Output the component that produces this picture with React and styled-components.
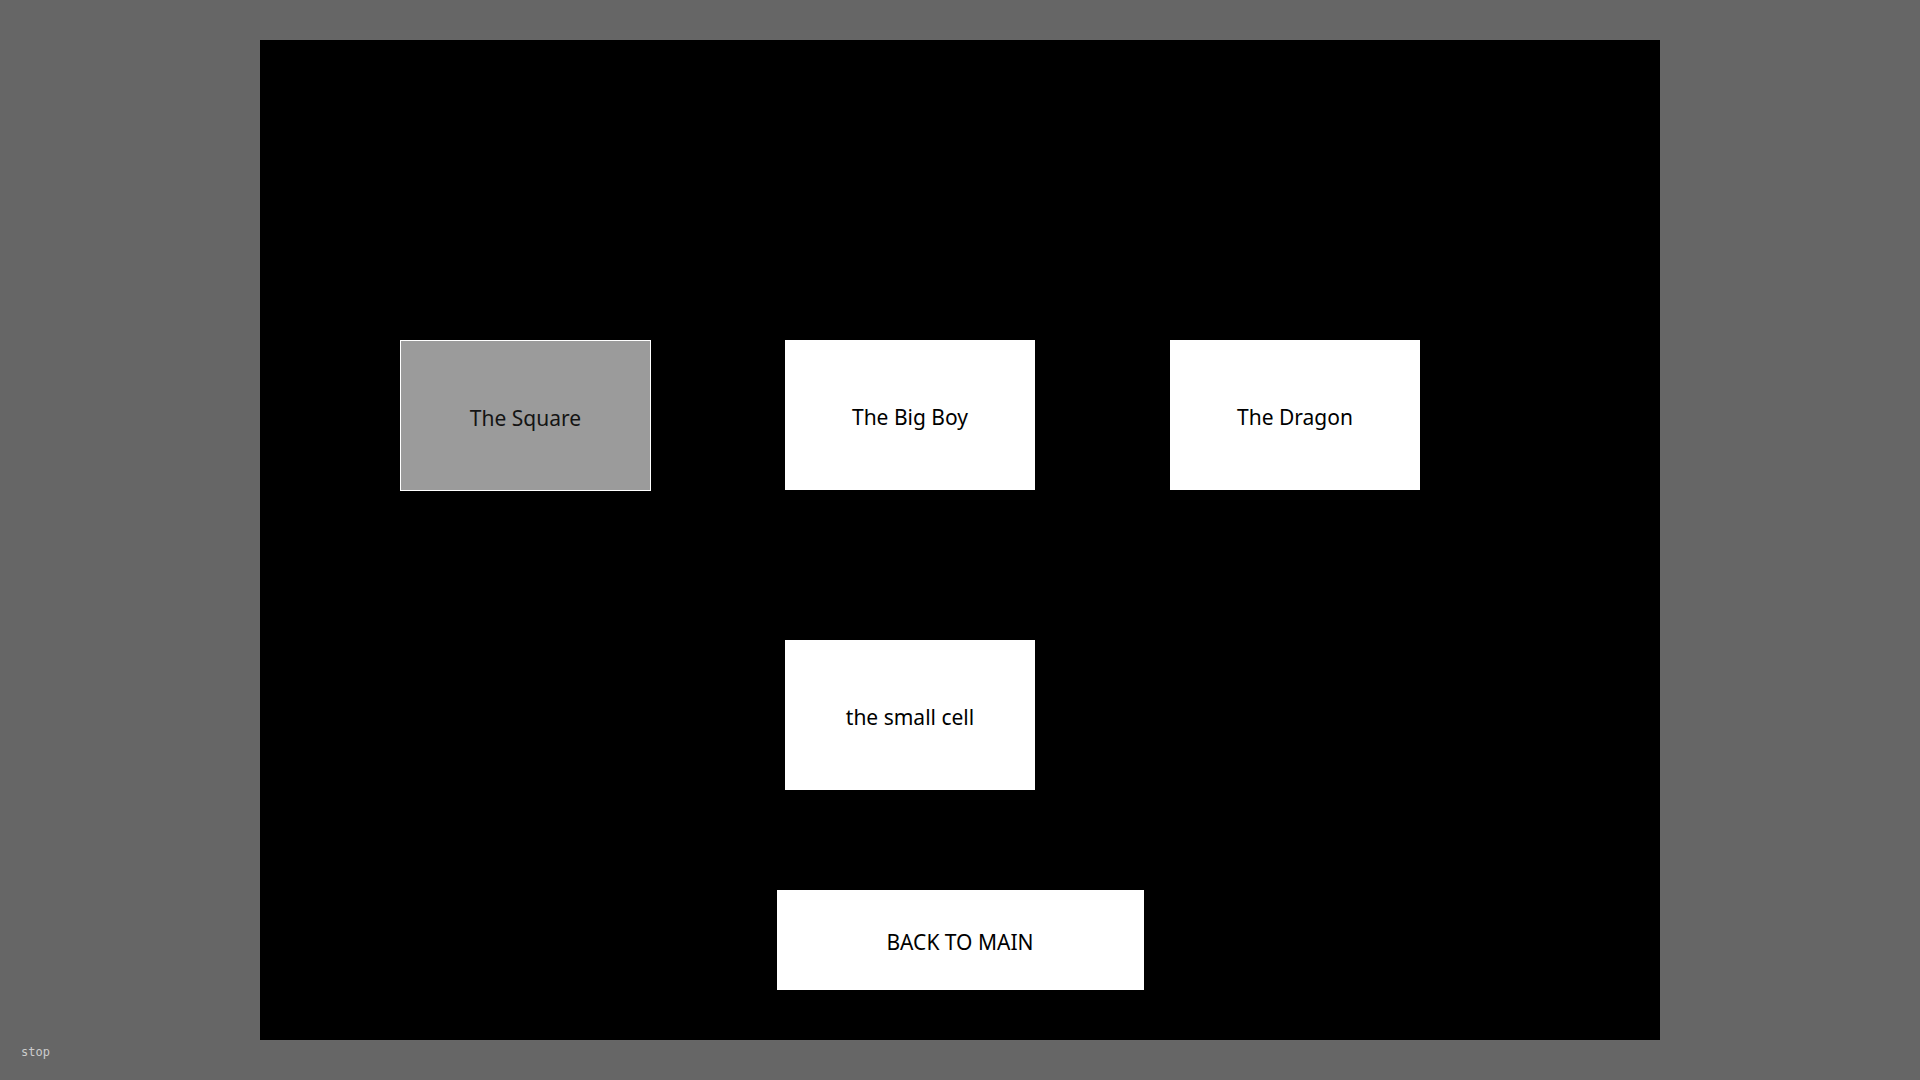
import React, { useState } from "react";
import styled, { createGlobalStyle } from "styled-components";

const GlobalStyle = createGlobalStyle`
  *, *::before, *::after { box-sizing: border-box; }
  body { margin: 0; background: #666666; }
`;

const Page = styled.div`
  display: grid;
  grid-template-columns: 1fr minmax(0, 1400px) 1fr;
  min-height: 100vh;
`;

const Side = styled.aside`
  display: flex;
  align-items: flex-end;
  padding: 20px;
`;

const StopButton = styled.button`
  padding: 0 1px;
  border: 0;
  background: none;
  color: #cccccc;
  font: 12px/16px "DejaVu Sans Mono", monospace;
  cursor: pointer;
`;

const Stage = styled.main`
  display: flex;
  flex-direction: column;
  align-items: center;
  justify-content: space-between;
  margin: 40px 0;
  padding: 300px 140px 50px;
  background: #000000;
`;

const Levels = styled.nav`
  display: grid;
  grid-template-columns: repeat(3, minmax(0, 250px));
  gap: 150px 135px;
  width: 100%;
`;

const MenuButton = styled.button`
  min-width: 0;
  padding: 4px 0 0;
  border: 0;
  border-radius: 0;
  background: #ffffff;
  color: #000000;
  font: 21px/28px "Noto Sans", sans-serif;
  cursor: pointer;
`;

const LevelButton = styled(MenuButton)`
  grid-column: ${({ $column }) => $column};
  height: ${({ $selected }) => ($selected ? "151px" : "150px")};
  margin: ${({ $selected }) => ($selected ? "0 -1px -1px 0" : "0")};
  border: ${({ $selected }) => ($selected ? "1px solid #ffffff" : "0")};
  background: ${({ $selected }) => ($selected ? "#9b9b9b" : "#ffffff")};
  color: ${({ $selected }) => ($selected ? "#141414" : "#000000")};
`;

const BackButton = styled(MenuButton)`
  width: 367px;
  max-width: 100%;
  height: 100px;
`;

const LEVELS = [
  { name: "The Square", column: 1 },
  { name: "The Big Boy", column: 2 },
  { name: "The Dragon", column: 3 },
  { name: "the small cell", column: 2 },
];

export default function App() {
  const [selected, setSelected] = useState("The Square");

  return (
    <Page>
      <GlobalStyle />
      <Side>
        <StopButton type="button">stop</StopButton>
      </Side>
      <Stage>
        <Levels>
          {LEVELS.map(({ name, column }) => (
            <LevelButton
              key={name}
              type="button"
              $column={column}
              $selected={name === selected}
              onMouseEnter={() => setSelected(name)}
            >
              {name}
            </LevelButton>
          ))}
        </Levels>
        <BackButton type="button">BACK TO MAIN</BackButton>
      </Stage>
    </Page>
  );
}
